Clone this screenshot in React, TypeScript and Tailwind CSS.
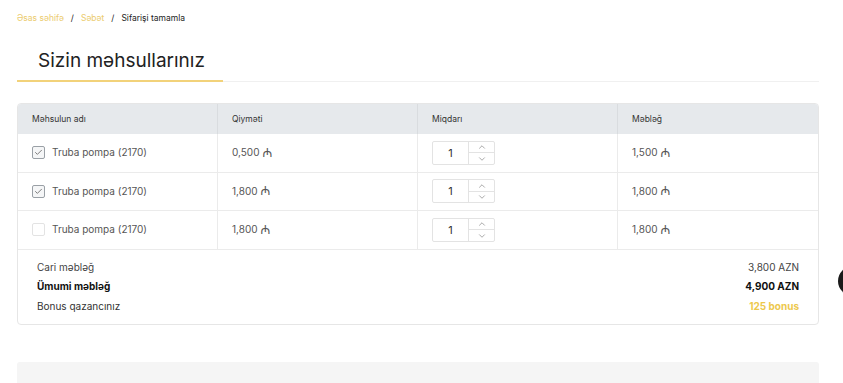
import { ChevronUp, ChevronDown, Check } from "lucide-react"

const rows = [
  { name: "Truba pompa (2170)", price: "0,500", qty: 1, total: "1,500", checked: true },
  { name: "Truba pompa (2170)", price: "1,800", qty: 1, total: "1,800", checked: true },
  { name: "Truba pompa (2170)", price: "1,800", qty: 1, total: "1,800", checked: false },
]

function Qty({ value }: { value: number }) {
  return (
    <div className="flex h-[24px] w-[63px] border border-[#e3e3e3] rounded-[2px] bg-white">
      <div className="flex-1 flex items-center justify-center text-[11px] text-[#333]">{value}</div>
      <div className="w-[26px] border-l border-[#e3e3e3] flex flex-col">
        <div className="flex-1 flex items-center justify-center border-b border-[#e3e3e3]">
          <ChevronUp className="w-[10px] h-[10px] text-[#777]" strokeWidth={1.5} />
        </div>
        <div className="flex-1 flex items-center justify-center">
          <ChevronDown className="w-[10px] h-[10px] text-[#777]" strokeWidth={1.5} />
        </div>
      </div>
    </div>
  )
}

function Price({ v }: { v: string }) {
  return (
    <span className="flex items-center gap-[3px]">
      {v}
      <span className="text-[12px] leading-none" style={{ fontFamily: "'DejaVu Sans', 'Noto Sans', sans-serif" }}>₼</span>
    </span>
  )
}

export default function App() {
  return (
    <div className="relative w-[843px] h-[383px] bg-white overflow-hidden" style={{ fontFamily: "Inter, 'Noto Sans', sans-serif" }}>
      <div className="mx-[17px] w-[802px]">
        {/* breadcrumb */}
        <div className="pt-[12px] flex items-center gap-[7px] text-[8.5px] leading-[12px]">
          <span className="text-[#ebcb6e]">Əsas səhifə</span>
          <span className="text-[#222]">/</span>
          <span className="text-[#ebcb6e]">Səbət</span>
          <span className="text-[#222]">/</span>
          <span className="text-[#222]">Sifarişi tamamla</span>
        </div>

        {/* title */}
        <div className="mt-[25px] flex items-end border-b border-[#f0f0f0]">
          <div className="w-[206px] border-b-2 border-[#f2d27a] -mb-px pl-[21px] pb-[7px]">
            <h1 className="text-[19px] leading-[24px] text-[#222] font-normal">Sizin məhsullarınız</h1>
          </div>
        </div>

        {/* table */}
        <div className="mt-[21px] border border-[#e6e6e6] rounded-[4px] overflow-hidden">
          <div className="grid grid-cols-4 bg-[#e6e9ec] h-[30px] text-[8.5px] text-[#333]">
            <div className="flex items-center pl-[14px] border-r border-[#d9dcdf]">Məhsulun adı</div>
            <div className="flex items-center pl-[14px] border-r border-[#d9dcdf]">Qiymәti</div>
            <div className="flex items-center pl-[14px] border-r border-[#d9dcdf]">Miqdarı</div>
            <div className="flex items-center pl-[14px]">Məbləğ</div>
          </div>
          {rows.map((r, i) => (
            <div key={i} className="grid grid-cols-4 h-[38.5px] border-b border-[#ebebeb] text-[10px] text-[#555]">
              <div className="flex items-center pl-[14px] border-r border-[#ebebeb] gap-[7px]">
                <span className={`w-[13px] h-[13px] rounded-[2px] border flex items-center justify-center ${r.checked ? "border-[#9aa0a6] bg-[#f5f6f7]" : "border-[#e3e3e3]"}`}>
                  {r.checked && <Check className="w-[9px] h-[9px] text-[#555]" strokeWidth={2} />}
                </span>
                <span>{r.name}</span>
              </div>
              <div className="flex items-center pl-[14px] border-r border-[#ebebeb]">
                <Price v={r.price} />
              </div>
              <div className="flex items-center pl-[14px] border-r border-[#ebebeb]">
                <Qty value={r.qty} />
              </div>
              <div className="flex items-center pl-[14px]">
                <Price v={r.total} />
              </div>
            </div>
          ))}
          <div className="px-[19px] pt-[11px] pb-[11px] flex flex-col gap-[6.5px] text-[10px] leading-[13px]">
            <div className="flex justify-between text-[#444]">
              <span>Cari məbləğ</span>
              <span>3,800 AZN</span>
            </div>
            <div className="flex justify-between text-[#111] font-bold">
              <span>Ümumi məbləğ</span>
              <span>4,900 AZN</span>
            </div>
            <div className="flex justify-between">
              <span className="text-[#333]">Bonus qazancınız</span>
              <span className="text-[#edc84c] font-bold">125 bonus</span>
            </div>
          </div>
        </div>

        <div className="mt-[37px] h-[40px] bg-[#f5f5f5] rounded-[3px]" />
      </div>

      {/* floating button, cut off at the edge */}
      <div className="absolute left-[838px] top-[266px] w-[30px] h-[30px] rounded-full bg-[#1a1a1a]" />
    </div>
  )
}
